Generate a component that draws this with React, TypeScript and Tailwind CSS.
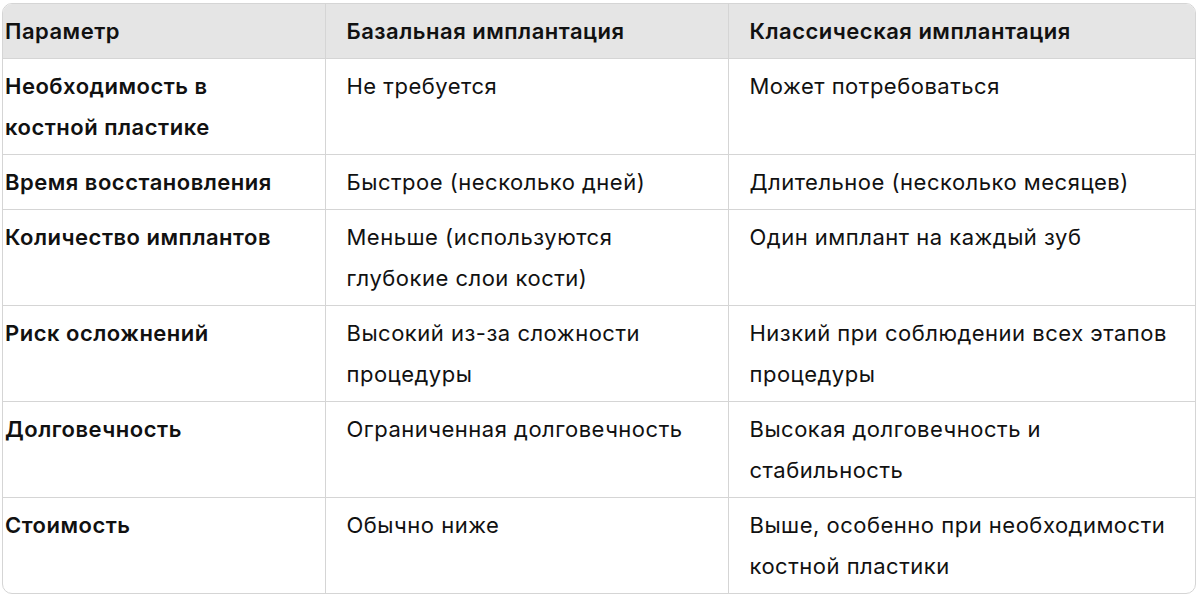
const rows: [string, string, string][] = [
  ["Необходимость в костной пластике", "Не требуется", "Может потребоваться"],
  ["Время восстановления", "Быстрое (несколько дней)", "Длительное (несколько месяцев)"],
  ["Количество имплантов", "Меньше (используются глубокие слои кости)", "Один имплант на каждый зуб"],
  ["Риск осложнений", "Высокий из-за сложности процедуры", "Низкий при соблюдении всех этапов процедуры"],
  ["Долговечность", "Ограниченная долговечность", "Высокая долговечность и стабильность"],
  ["Стоимость", "Обычно ниже", "Выше, особенно при необходимости костной пластики"],
];

export default function App() {
  return (
    <div className="min-h-screen bg-white pl-[2px] pt-[3px] font-['Inter','Noto_Sans',sans-serif] text-[22px] leading-[41px] tracking-[0.5px] text-[#111111]">
      <div className="w-[1194px] overflow-hidden rounded-[10px] border border-[#d5d5d5]">
        <table className="w-full table-fixed border-collapse">
          <colgroup>
            <col className="w-[322px]" />
            <col className="w-[403px]" />
            <col className="w-[467px]" />
          </colgroup>
          <thead>
            <tr className="bg-[#e5e5e5] text-left">
              <th className="border-r border-b border-[#d5d5d5] pt-[7px] pb-[6px] pl-[2px] pr-[21px] align-top font-semibold">
                Параметр
              </th>
              <th className="border-r border-b border-[#d5d5d5] pt-[7px] pb-[6px] px-[21px] align-top font-semibold">
                Базальная имплантация
              </th>
              <th className="border-b border-[#d5d5d5] pt-[7px] pb-[6px] px-[21px] align-top font-semibold">
                Классическая имплантация
              </th>
            </tr>
          </thead>
          <tbody>
            {rows.map(([param, basal, classic], i) => {
              const last = i === rows.length - 1;
              return (
                <tr key={param}>
                  <td
                    className={`border-r border-[#d5d5d5] pt-[7px] pb-[6px] pl-[2px] pr-[21px] align-top font-semibold ${
                      last ? "" : "border-b"
                    }`}
                  >
                    {param}
                  </td>
                  <td
                    className={`border-r border-[#d5d5d5] pt-[7px] pb-[6px] px-[21px] align-top ${
                      last ? "" : "border-b"
                    }`}
                  >
                    {basal}
                  </td>
                  <td
                    className={`border-[#d5d5d5] pt-[7px] pb-[6px] px-[21px] align-top ${
                      last ? "" : "border-b"
                    }`}
                  >
                    {classic}
                  </td>
                </tr>
              );
            })}
          </tbody>
        </table>
      </div>
    </div>
  );
}
